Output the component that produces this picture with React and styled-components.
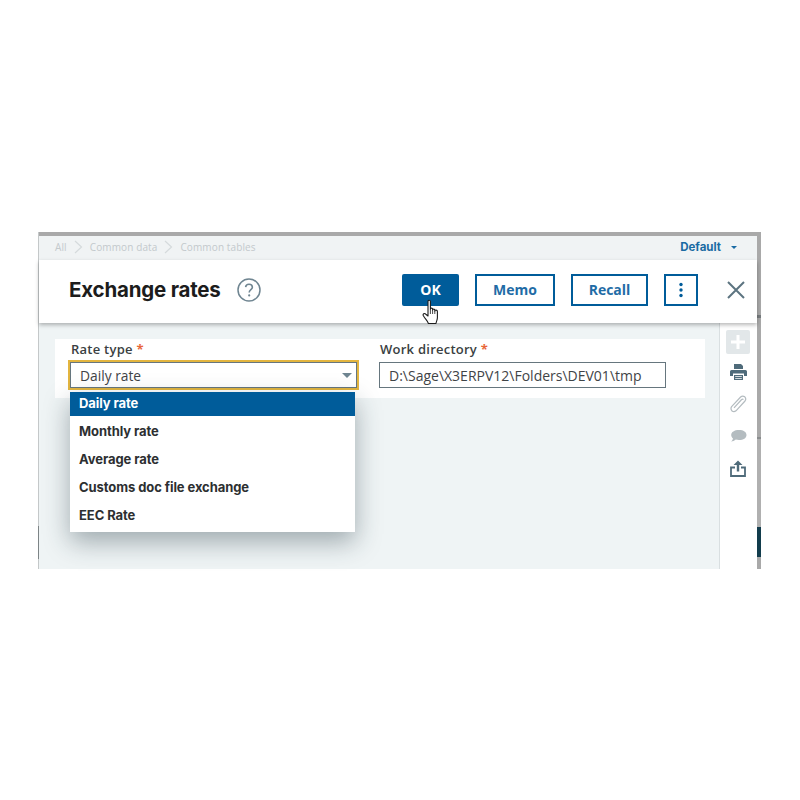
import React from "react";
import styled, { createGlobalStyle } from "styled-components";

const GlobalStyle = createGlobalStyle`
  html, body {
    margin: 0;
    background: #fff;
    font-family: "Open Sans", "Liberation Sans", sans-serif;
  }
`;

const OPTIONS = ["Daily rate", "Monthly rate", "Average rate", "Customs doc file exchange", "EEC Rate"];

const App = () => (
  <>
    <GlobalStyle />
    <Page>
      <Frame>
        <TopEdge />
        <Body>
          <Main>
            <Breadcrumb>
              <Crumbs>
                <Crumb>All</Crumb>
                <Chevron />
                <Crumb>Common data</Crumb>
                <Chevron />
                <Crumb>Common tables</Crumb>
              </Crumbs>
              <ViewPicker>
                Default <Caret />
              </ViewPicker>
            </Breadcrumb>
            <Header>
              <TitleGroup>
                <Title>Exchange rates</Title>
                <HelpIcon />
              </TitleGroup>
              <Actions>
                <OkWrap>
                  <PrimaryButton>OK</PrimaryButton>
                  <HandCursor />
                </OkWrap>
                <OutlineButton $width={80}>Memo</OutlineButton>
                <OutlineButton $width={77}>Recall</OutlineButton>
                <MoreButton>
                  <svg width="4" height="16" viewBox="0 0 4 16">
                    <circle cx="2" cy="2.5" r="1.7" fill="#005c9a" />
                    <circle cx="2" cy="8" r="1.7" fill="#005c9a" />
                    <circle cx="2" cy="13.5" r="1.7" fill="#005c9a" />
                  </svg>
                </MoreButton>
                <CloseButton>
                  <svg width="18" height="18" viewBox="0 0 18 18">
                    <path d="M1 1 L17 17 M17 1 L1 17" stroke="#5c7480" strokeWidth="2" fill="none" />
                  </svg>
                </CloseButton>
              </Actions>
            </Header>
            <Content>
              <Workspace>
                <Card>
                  <Field $width={288}>
                    <Label>
                      Rate type <Required>*</Required>
                    </Label>
                    <SelectBox>
                      Daily rate
                      <SelectCaret />
                    </SelectBox>
                    <Menu>
                      {OPTIONS.map((o, i) => (
                        <MenuItem key={o} $active={i === 0}>
                          {o}
                        </MenuItem>
                      ))}
                    </Menu>
                  </Field>
                  <Field $width={287}>
                    <Label>
                      Work directory <Required>*</Required>
                    </Label>
                    <TextBox>D:\Sage\X3ERPV12\Folders\DEV01\tmp</TextBox>
                  </Field>
                </Card>
              </Workspace>
              <Sidebar>
                <AddTile>
                  <svg width="14" height="14" viewBox="0 0 14 14">
                    <path d="M7 0 V14 M0 7 H14" stroke="#fff" strokeWidth="3" />
                  </svg>
                </AddTile>
                <ToolIcon>
                  <svg width="17" height="16" viewBox="0 0 17 16">
                    <path d="M4 0 H11 L13 2 V5 H4 Z" fill="#4f6b7a" />
                    <path d="M1.5 6 H15.5 Q17 6 17 7.5 V12 H14 V9.5 H3 V12 H0 V7.5 Q0 6 1.5 6 Z" fill="#4f6b7a" />
                    <path d="M4 11 H13 V16 H4 Z M5.2 12.2 V13 H11.8 V12.2 Z M5.2 14 V14.8 H11.8 V14 Z" fill="#4f6b7a" fillRule="evenodd" />
                  </svg>
                </ToolIcon>
                <ToolIcon>
                  <svg width="17" height="18" viewBox="0 0 17 18">
                    <path d="M1.6 11.6 L10.6 2 Q12.6 0.2 14.8 1.8 Q16.6 3.8 15 6 L6 15.8 Q4 17.4 2 16 Q0.2 13.6 1.6 11.6 Z" fill="none" stroke="#b4bcc0" strokeWidth="1.2" />
                    <path d="M4 12.8 L11.4 4.8 Q12.6 3.8 13.4 4.6" fill="none" stroke="#b4bcc0" strokeWidth="1.2" />
                  </svg>
                </ToolIcon>
                <ToolIcon>
                  <svg width="17" height="14" viewBox="0 0 17 14">
                    <path d="M9 1 C13.5 1 16.5 3 16.5 6 C16.5 9 13.5 11 9 11 C7.8 11 6.8 10.9 5.8 10.6 C4.5 11.8 2.8 12.6 1 12.6 C2 11.6 2.8 10.6 3 9.4 C1.8 8.5 1.2 7.3 1.2 6 C1.2 3 4.5 1 9 1 Z" fill="#b4bcc0" />
                  </svg>
                </ToolIcon>
                <ToolIcon>
                  <svg width="16" height="17" viewBox="0 0 16 17">
                    <path d="M8 0.5 L12.5 5 H9.2 V11.5 H6.8 V5 H3.5 Z" fill="#4f6b7a" />
                    <path d="M5 7.5 H1 V16 H15 V7.5 H11" fill="none" stroke="#4f6b7a" strokeWidth="1.8" />
                  </svg>
                </ToolIcon>
              </Sidebar>
            </Content>
          </Main>
          <RightEdge />
        </Body>
      </Frame>
    </Page>
  </>
);

const HelpIcon = () => (
  <svg width="24" height="24" viewBox="0 0 24 24" style={{ marginLeft: 16 }}>
    <circle cx="12" cy="12" r="11" fill="none" stroke="#6f8591" strokeWidth="1.5" />
    <path d="M8.6 9.2 C8.8 7.2 10.2 6.2 12 6.2 C14 6.2 15.4 7.4 15.4 9.2 C15.4 11.6 12.2 11.6 12.2 14.4" fill="none" stroke="#6f8591" strokeWidth="1.6" />
    <circle cx="12.2" cy="17.4" r="1.1" fill="#6f8591" />
  </svg>
);

const Chevron = () => (
  <svg width="9" height="14" viewBox="0 0 9 14">
    <path d="M1 1 L7.5 7 L1 13" fill="none" stroke="#d5dadc" strokeWidth="1.2" />
  </svg>
);

const HandCursor = () => (
  <CursorSvg width="18" height="26" viewBox="0 0 18 26">
    <path
      d="M6 14 V2.4 C6 0.8 8.4 0.8 8.4 2.4 V10 C8.4 8.8 10.6 8.8 10.6 10.2 V11 C10.6 9.8 12.8 9.8 12.8 11.2 V12 C12.8 10.8 15.4 10.8 15.4 12.4 V18.5 C15.4 21 14.4 22 14 24.5 H6.4 C5.6 22 3.6 20.4 1.4 16.8 C0.4 15 2.4 13.6 3.8 15.2 L6 17 Z"
      fill="#fff"
      stroke="#1c1c1c"
      strokeWidth="1.1"
      strokeLinejoin="round"
    />
    <path d="M8.4 10 V15 M10.6 11 V15 M12.8 12 V15" stroke="#1c1c1c" strokeWidth="0.8" fill="none" />
  </CursorSvg>
);

export default App;

const Page = styled.div`
  width: 800px;
  height: 800px;
  padding: 232px 0 0 38px;
  box-sizing: border-box;
  overflow: hidden;
`;

const Frame = styled.div`
  width: 723px;
  height: 337px;
  display: flex;
  flex-direction: column;
  border-left: 1px solid;
  border-image: linear-gradient(#c4c8c9 0 293px, #7d8486 293px 326px, #c4c8c9 326px) 1;
  box-sizing: border-box;
`;

const TopEdge = styled.div`
  height: 4px;
  background: #a9a9a9;
`;

const Body = styled.div`
  flex: 1;
  display: flex;
  min-height: 0;
`;

const Main = styled.div`
  flex: 1;
  display: flex;
  flex-direction: column;
  min-width: 0;
`;

const RightEdge = styled.div`
  width: 4px;
  background: linear-gradient(
    #a9a9a9 0 79px,
    #777c7e 79px 82px,
    #a9a9a9 82px 201px,
    #8a8d8e 201px 203px,
    #b0b0b0 203px 291px,
    #123c4c 291px 321px,
    #a9a9a9 321px
  );
`;

const Breadcrumb = styled.div`
  height: 24px;
  background: #f0f3f4;
  display: flex;
  align-items: center;
  justify-content: space-between;
  padding: 0 20px 2px 16px;
  box-sizing: border-box;
  flex-shrink: 0;
`;

const Crumbs = styled.div`
  display: flex;
  align-items: center;
  gap: 7px;
`;

const Crumb = styled.span`
  font-size: 10px;
  letter-spacing: 0.12px;
  color: #c3c9cc;
`;

const ViewPicker = styled.div`
  display: flex;
  align-items: center;
  gap: 10px;
  font-size: 11.5px;
  font-weight: 700;
  color: #1a6ba3;
  font-family: "Inter", sans-serif;
`;

const Caret = styled.span`
  width: 0;
  height: 0;
  border-left: 3px solid transparent;
  border-right: 3px solid transparent;
  border-top: 3px solid #1a6ba3;
`;

const Header = styled.div`
  height: 63px;
  flex-shrink: 0;
  background: #fff;
  display: flex;
  align-items: center;
  justify-content: space-between;
  padding: 0 12px 4px 30px;
  box-sizing: border-box;
  box-shadow: 0 2px 4px rgba(0, 0, 0, 0.28);
  position: relative;
  z-index: 2;
`;

const TitleGroup = styled.div`
  display: flex;
  align-items: center;
`;

const Title = styled.h1`
  margin: 0;
  font-family: "Inter", sans-serif;
  font-size: 20.5px;
  font-weight: 700;
  letter-spacing: -0.2px;
  color: #1c1c1c;
`;

const Actions = styled.div`
  display: flex;
  align-items: center;
  gap: 16px;
`;

const OkWrap = styled.div`
  position: relative;
  display: flex;
`;

const CursorSvg = styled.svg`
  position: absolute;
  left: 20px;
  top: 25px;
`;

const PrimaryButton = styled.button`
  width: 57px;
  height: 32px;
  border: none;
  border-radius: 2px;
  background: #005c9a;
  color: #fff;
  font: 700 14px "Open Sans", sans-serif;
  padding: 0;
`;

const OutlineButton = styled.button`
  width: ${(p) => p.$width}px;
  height: 32px;
  border: 2px solid #005c9a;
  background: #fff;
  color: #1f6ca6;
  font: 700 14px "Open Sans", sans-serif;
  padding: 0;
  box-sizing: border-box;
`;

const MoreButton = styled(OutlineButton)`
  width: 34px;
  display: flex;
  align-items: center;
  justify-content: center;
`;

const CloseButton = styled.div`
  display: flex;
  margin-left: 13px;
`;

const Content = styled.div`
  flex: 1;
  display: flex;
  min-height: 0;
`;

const Workspace = styled.div`
  flex: 1;
  background: #eff4f5;
  padding: 16px 14px 0 16px;
`;

const Card = styled.div`
  height: 59px;
  background: #fff;
  display: flex;
  gap: 21px;
  padding: 3px 0 0 15px;
  box-sizing: border-box;
`;

const Field = styled.div`
  position: relative;
  width: ${(p) => p.$width}px;
  display: flex;
  flex-direction: column;
`;

const Label = styled.div`
  height: 20px;
  font-size: 13px;
  font-weight: 600;
  line-height: 15px;
  color: #3a3f42;
  padding-left: 1px;
  letter-spacing: 0.25px;
`;

const Required = styled.span`
  color: #e8673a;
  font-weight: 700;
`;

const SelectBox = styled.div`
  position: relative;
  height: 26px;
  border: 1px solid #66767e;
  outline: 2px solid #e3b53f;
  outline-offset: 0;
  background: #fff;
  font-size: 13.8px;
  line-height: 26px;
  color: #3f4447;
  padding-left: 9px;
  box-sizing: border-box;
  width: 287px;
`;

const SelectCaret = styled.span`
  position: absolute;
  right: 4px;
  top: 10px;
  width: 0;
  height: 0;
  border-left: 5px solid transparent;
  border-right: 5px solid transparent;
  border-top: 5px solid #6f8591;
`;

const Menu = styled.div`
  position: absolute;
  left: 0;
  top: 50px;
  width: 285px;
  padding-bottom: 4px;
  background: #fff;
  box-shadow: 0 10px 24px rgba(30, 50, 60, 0.38);
  z-index: 3;
`;

const MenuItem = styled.div`
  height: ${(p) => (p.$active ? 24 : 28)}px;
  line-height: ${(p) => (p.$active ? 23 : 31)}px;
  padding-left: 9px;
  font-family: "Inter", sans-serif;
  font-size: 13px;
  font-weight: 700;
  letter-spacing: -0.08px;
  color: ${(p) => (p.$active ? "#fff" : "#2d2f31")};
  background: ${(p) => (p.$active ? "#005c9a" : "#fff")};
`;

const TextBox = styled.div`
  height: 26px;
  width: 287px;
  border: 1px solid #66767e;
  background: #fff;
  font-size: 14px;
  line-height: 26px;
  color: #3f4447;
  padding-left: 9px;
  box-sizing: border-box;
`;

const Sidebar = styled.div`
  width: 38px;
  flex-shrink: 0;
  background: #fff;
  border-left: 1px solid #d9dfe1;
  box-sizing: border-box;
  display: flex;
  flex-direction: column;
  align-items: center;
  padding: 8px 1px 0 0;
`;

const AddTile = styled.div`
  width: 24px;
  height: 24px;
  margin-top: -1px;
  background: #e2e7e9;
  border-radius: 2px;
  display: flex;
  align-items: center;
  justify-content: center;
  margin-bottom: 2px;
`;

const ToolIcon = styled.div`
  height: 32px;
  width: 24px;
  display: flex;
  align-items: center;
  justify-content: center;
`;
